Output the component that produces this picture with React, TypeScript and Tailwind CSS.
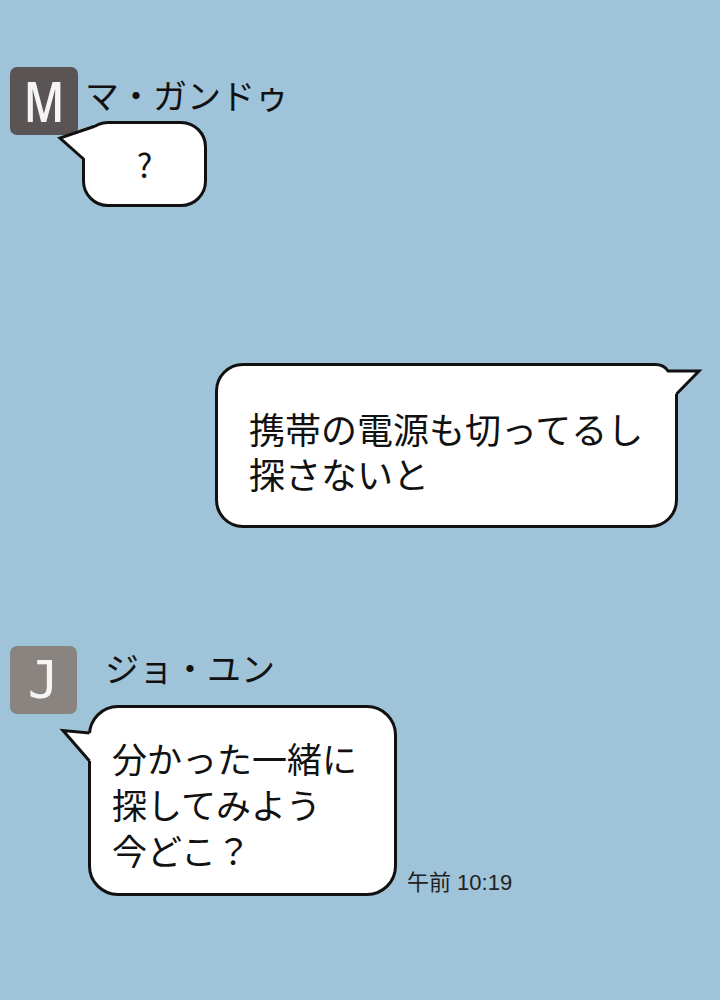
export default function App() {
  return (
    <div className="w-[720px] h-[1000px] overflow-hidden bg-[#9fc3d8] text-[#111] font-['Noto_Sans_CJK_JP',sans-serif] flex flex-col pt-[67px]">
      {/* マ・ガンドゥ */}
      <div className="flex items-start pl-[10px]">
        <div className="w-[68px] h-[68px] rounded-[7px] bg-[#5b5455] flex items-center justify-center shrink-0">
          <span className="text-[#f4f4f4] text-[56px] leading-none font-semibold font-['Noto_Sans',sans-serif] scale-x-[0.78] -mt-[2px]">M</span>
        </div>
        <div className="flex flex-col ml-[4px]">
          <div className="pl-[3px] mt-[11px] text-[34px] leading-[34px] whitespace-nowrap">マ・ガンドゥ</div>
          <div className="relative mt-[9px] w-[125px] h-[86px] border-[3px] border-[#111] rounded-[26px] bg-white flex items-center justify-center">
            <span className="text-[33px] leading-none">?</span>
            <svg className="absolute -left-[3px] -top-[3px] overflow-visible" width="1" height="1">
              <path d="M12 5.5 L-22 17 L1.5 38 L16 38 L16 8 Z" fill="#fff" />
              <path d="M12 5.5 L-22 17 L1.5 38" fill="none" stroke="#111" strokeWidth="3" strokeLinejoin="miter" strokeLinecap="round" />
            </svg>
          </div>
        </div>
      </div>

      {/* 自分 */}
      <div className="self-end mr-[42px] mt-[156px]">
        <div className="relative w-[463px] h-[165px] border-[3px] border-[#111] rounded-[28px] bg-white pl-[31px] pt-[40px] text-[36px] leading-[45px]">
          <p>
            携帯の電源も切ってるし
            <br />
            探さないと
          </p>
          <svg className="absolute -left-[3px] -top-[3px] overflow-visible" width="1" height="1">
            <path d="M436 1.5 L440 1.5 Q449 1.5 453 8 L484 8 L461.5 31 L436 31 Z" fill="#fff" />
            <path d="M436 1.5 L440 1.5 Q449 1.5 453 8 L484 8 L461.5 31" fill="none" stroke="#111" strokeWidth="3" strokeLinejoin="miter" />
          </svg>
        </div>
      </div>

      {/* ジョ・ユン */}
      <div className="flex items-start pl-[10px] mt-[118px]">
        <div className="w-[67px] h-[68px] rounded-[7px] bg-[#8a8481] flex items-center justify-center shrink-0">
          <span className="text-[#f4f4f4] text-[52px] leading-none font-['DejaVu_Sans_Mono',monospace]">J</span>
        </div>
        <div className="flex flex-col ml-[11px]">
          <div className="pl-[17px] mt-[5px] text-[34px] leading-[34px] whitespace-nowrap">ジョ・ユン</div>
          <div className="flex items-end mt-[20px]">
            <div className="relative w-[309px] h-[191px] border-[3px] border-[#111] rounded-[30px] bg-white pl-[21px] pt-[27px] text-[35px] leading-[46px] shrink-0">
              <p>
                分かった一緒に
                <br />
                探してみよう
                <br />
                今どこ？
              </p>
              <svg className="absolute -left-[3px] -top-[3px] overflow-visible" width="1" height="1">
                <path d="M1.5 28 L-25 25.5 L1.5 56 L8 56 L8 28 Z" fill="#fff" />
                <path d="M1.5 28 L-25 25.5 L1.5 56" fill="none" stroke="#111" strokeWidth="3" strokeLinejoin="miter" />
              </svg>
            </div>
            <div className="ml-[10px] mb-[2px] text-[22px] leading-[22px] text-[#222] whitespace-nowrap font-['Liberation_Sans','Noto_Sans_CJK_JP',sans-serif]">
              午前 10:19
            </div>
          </div>
        </div>
      </div>
    </div>
  );
}
